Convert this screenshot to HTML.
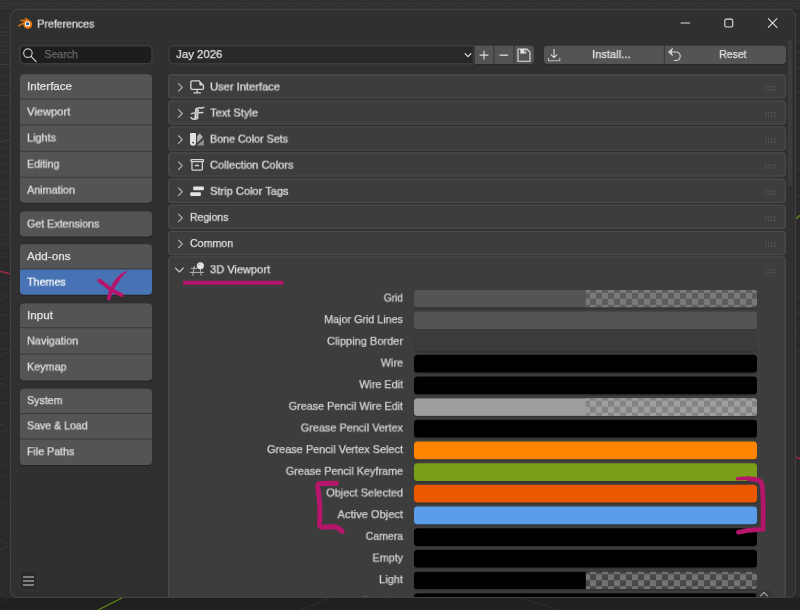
<!DOCTYPE html>
<html lang="en"><head><meta charset="utf-8"><title>Preferences</title>
<style>
html,body{margin:0;padding:0}
body{width:800px;height:610px;overflow:hidden;background:#2a2a2a;position:relative;font-family:"Liberation Sans",sans-serif;font-size:11.5px}
#g{position:absolute;left:0;top:0;display:block}
#tx{position:absolute;left:0;top:0;width:800px;height:597px;overflow:hidden}
.t{position:absolute;white-space:nowrap;transform-origin:0 50%;display:block;height:16px;line-height:16px;will-change:transform;-webkit-font-smoothing:antialiased;-webkit-text-stroke:0.25px}
</style></head><body>
<svg id="g" width="800" height="610" viewBox="0 0 800 610">
<defs><filter id="bl" x="-5%" y="-30%" width="110%" height="160%"><feGaussianBlur stdDeviation="0.6"/></filter></defs>
<svg x="0" y="0" width="800" height="610" viewBox="0 0 800 610" overflow="visible"><defs><pattern id="dots" x="0" y="0" width="3" height="2" patternUnits="userSpaceOnUse"><rect width="3" height="2" fill="#2e2e2e"/><rect x="0" y="0" width="2" height="1" fill="#363636"/></pattern></defs><rect x="0" y="0" width="800" height="9.5" fill="url(#dots)"/><rect x="0" y="3" width="800" height="1.5" fill="#383838" opacity="0.5"/><rect x="0" y="9.5" width="11" height="240" fill="#2d2d2d"/><rect x="0" y="598" width="800" height="12" fill="#202020"/><g stroke="#353535" stroke-width="1.1" fill="none"><path d="M0 19.7 L10.5 19.7 M0 24.0 L10.5 24.0 M0 27.5 L10.5 27.5 M0 35.5 L10.5 35.5 M0 42.0 L10.5 42.0 M0 46.0 L10.5 46.0 M0 50.0 L10.5 50.0 M0 67.5 L10.5 67.5 M0 76.0 L10.5 76.0 M0 84.0 L10.5 84.0 M0 104.3 L10.5 104.0 M0 112.0 L10.5 111.5 M0 120.0 L10.5 119.5 M0 128.0 L10.5 127.3 M0 134.0 L10.5 133.3 M0 149.0 L10.5 148.3 M0 156.0 L10.5 155.3 M0 164.6 L10.5 164.0 M0 173.0 L10.5 172.2 M0 184.3 L10.5 183.4 M0 192.0 L10.5 191.0 M0 206.7 L10.5 205.7 M0 215.0 L10.5 214.0 M0 224.5 L10.5 223.3 M0 235.0 L10.5 233.6 M0 245.5 L10.5 243.6 M0 251.8 L10.5 253.8 M0 257.6 L10.5 255.6 M0 284.7 L10.5 281.4 M0 295.3 L10.5 293.3 M0 300.5 L10.5 295.9 M0 316.3 L10.5 313.7 M0 334.5 L10.5 331.6 M0 347.6 L10.5 351.0 M0 355.5 L10.5 351.6 M0 379.2 L10.5 376.0 M0 383.2 L10.5 385.8 M0 404.0 L10.5 401.3 M0 424.3 L10.5 428.3 M0 432.9 L10.5 429.0 M0 467.1 L10.5 463.2 M0 475.0 L10.5 479.0 M0 505.0 L10.5 500.4 M0 539.2 L10.5 544.5 M0 549.7 L10.5 545.1"/></g><g stroke="#3c3c3c" stroke-width="1.2" fill="none"><path d="M0 32.0 L10.5 32.0 M0 52.5 L10.5 52.5 M0 64.5 L10.5 64.5 M0 95.8 L10.5 95.5 M0 141.8 L10.5 139.8 M0 199.5 L10.5 197.5"/></g><g stroke="#363636" stroke-width="1" fill="none"><path d="M796 14 H800 M796 22 H800 M796 30 H800 M796 41 H800 M796 52 H800 M796 68 H800 M796 86 H800 M796 92 H800 M796 118 H800 M796 150 H800 M796 169 H800 M796 186 H800 M796 196 H800 M796 205 H800 M796 232 H800 M796 283 L800 282.5 M796 297 L800 296.5 M796 313 L800 313 M796 330 L800 326 M796 351 L800 351 M796 426 L800 426.5 M796 479 L800 476 M796 489 L800 487 M796 530 L800 529 M796 582 L800 579"/></g><path d="M0 271.2 L10.5 274" stroke="#9e2840" stroke-width="1.5"/><path d="M796 218.8 L800 215.4" stroke="#5f8a1c" stroke-width="1.4"/><path d="M796 457 L800 459" stroke="#9e2840" stroke-width="1.5"/></svg>
<path d="M18 9H788A8 8 0 0 1 796 17V590A8 8 0 0 1 788 598H18A8 8 0 0 1 10 590V17A8 8 0 0 1 18 9Z" fill="#43413f"/>
<path d="M18 10H788A7 7 0 0 1 795 17V590A7 7 0 0 1 788 597H18A7 7 0 0 1 11 590V17A7 7 0 0 1 18 10Z" fill="#303030"/>
<svg x="14" y="12" width="30" height="22" viewBox="14 12 30 22" overflow="visible"><g stroke="#ea7a0c" fill="none" stroke-linecap="round"><path d="M20.9 20.5 H27" stroke-width="1.35"/><path d="M18.9 25.9 L25 22" stroke-width="1.45"/><path d="M25.4 18.3 L28.6 20.6" stroke-width="1.3"/></g><ellipse cx="27.75" cy="24.35" rx="4.45" ry="4.3" fill="#e9790b"/><circle cx="27.5" cy="23.9" r="2.65" fill="#f7f2ea"/><ellipse cx="27.55" cy="23.8" rx="1.65" ry="1.5" fill="#24579a"/></svg>
<svg x="676" y="14" width="110" height="18" viewBox="0 0 110 18" overflow="visible"><g stroke="#e0e0e0" stroke-width="1.1" fill="none" stroke-linecap="round"><path d="M5 9 H13.5"/><rect x="48.8" y="5.1" width="7.9" height="7.9" rx="1.5"/><path d="M92.3 4.7 L100.9 13.3 M100.9 4.7 L92.3 13.3"/></g></svg>
<path d="M24.2 45H147.8A5 5 0 0 1 152.8 50V59.5A5 5 0 0 1 147.8 64.5H24.2A5 5 0 0 1 19.2 59.5V50A5 5 0 0 1 24.2 45Z" fill="#3c3c3c"/>
<path d="M24.2 46.6H147.8A3.4 3.4 0 0 1 151.2 50V59.5A3.4 3.4 0 0 1 147.8 62.9H24.2A3.4 3.4 0 0 1 20.8 59.5V50A3.4 3.4 0 0 1 24.2 46.6Z" fill="#1d1d1d"/>
<svg x="22" y="47" width="16" height="16" viewBox="0 0 16 16" overflow="visible"><g stroke="#c6c6c6" stroke-width="1.2" fill="none" stroke-linecap="round"><circle cx="5.9" cy="6.2" r="4.25"/><path d="M9.1 9.5 L14.2 14.6"/></g></svg>
<path d="M24 75.3H148A4 4 0 0 1 152 79.3V199.8A4 4 0 0 1 148 203.8H24A4 4 0 0 1 20 199.8V79.3A4 4 0 0 1 24 75.3Z" fill="#000" opacity="0.3" filter="url(#bl)"/>
<path d="M24 74.3H148A4 4 0 0 1 152 78.3V198.8A4 4 0 0 1 148 202.8H24A4 4 0 0 1 20 198.8V78.3A4 4 0 0 1 24 74.3Z" fill="#393939"/>
<path d="M24 74.3H148A4 4 0 0 1 152 78.3V98.5H20V78.3A4 4 0 0 1 24 74.3Z" fill="#545454"/>
<path d="M20 99.5H152V124.5H20V99.5Z" fill="#545454"/>
<path d="M20 125.5H152V150.7H20V125.5Z" fill="#545454"/>
<path d="M20 151.7H152V176.7H20V151.7Z" fill="#545454"/>
<path d="M20 177.7H152V198.8A4 4 0 0 1 148 202.8H24A4 4 0 0 1 20 198.8V177.7Z" fill="#545454"/>
<path d="M24 212.5H148A4 4 0 0 1 152 216.5V233.4A4 4 0 0 1 148 237.4H24A4 4 0 0 1 20 233.4V216.5A4 4 0 0 1 24 212.5Z" fill="#000" opacity="0.3" filter="url(#bl)"/>
<path d="M24 211.5H148A4 4 0 0 1 152 215.5V232.4A4 4 0 0 1 148 236.4H24A4 4 0 0 1 20 232.4V215.5A4 4 0 0 1 24 211.5Z" fill="#393939"/>
<path d="M24 211.5H148A4 4 0 0 1 152 215.5V232.4A4 4 0 0 1 148 236.4H24A4 4 0 0 1 20 232.4V215.5A4 4 0 0 1 24 211.5Z" fill="#545454"/>
<path d="M24 245.3H148A4 4 0 0 1 152 249.3V291.7A4 4 0 0 1 148 295.7H24A4 4 0 0 1 20 291.7V249.3A4 4 0 0 1 24 245.3Z" fill="#000" opacity="0.3" filter="url(#bl)"/>
<path d="M24 244.3H148A4 4 0 0 1 152 248.3V290.7A4 4 0 0 1 148 294.7H24A4 4 0 0 1 20 290.7V248.3A4 4 0 0 1 24 244.3Z" fill="#393939"/>
<path d="M24 244.3H148A4 4 0 0 1 152 248.3V268.6H20V248.3A4 4 0 0 1 24 244.3Z" fill="#545454"/>
<path d="M20 269.6H152V290.7A4 4 0 0 1 148 294.7H24A4 4 0 0 1 20 290.7V269.6Z" fill="#4772b3"/>
<path d="M24 304.6H148A4 4 0 0 1 152 308.6V377.4A4 4 0 0 1 148 381.4H24A4 4 0 0 1 20 377.4V308.6A4 4 0 0 1 24 304.6Z" fill="#000" opacity="0.3" filter="url(#bl)"/>
<path d="M24 303.6H148A4 4 0 0 1 152 307.6V376.4A4 4 0 0 1 148 380.4H24A4 4 0 0 1 20 376.4V307.6A4 4 0 0 1 24 303.6Z" fill="#393939"/>
<path d="M24 303.6H148A4 4 0 0 1 152 307.6V327.2H20V307.6A4 4 0 0 1 24 303.6Z" fill="#545454"/>
<path d="M20 328.2H152V353.4H20V328.2Z" fill="#545454"/>
<path d="M20 354.4H152V376.4A4 4 0 0 1 148 380.4H24A4 4 0 0 1 20 376.4V354.4Z" fill="#545454"/>
<path d="M24 389.7H148A4 4 0 0 1 152 393.7V462.1A4 4 0 0 1 148 466.1H24A4 4 0 0 1 20 462.1V393.7A4 4 0 0 1 24 389.7Z" fill="#000" opacity="0.3" filter="url(#bl)"/>
<path d="M24 388.7H148A4 4 0 0 1 152 392.7V461.1A4 4 0 0 1 148 465.1H24A4 4 0 0 1 20 461.1V392.7A4 4 0 0 1 24 388.7Z" fill="#393939"/>
<path d="M24 388.7H148A4 4 0 0 1 152 392.7V412.9H20V392.7A4 4 0 0 1 24 388.7Z" fill="#545454"/>
<path d="M20 413.9H152V438.6H20V413.9Z" fill="#545454"/>
<path d="M20 439.6H152V461.1A4 4 0 0 1 148 465.1H24A4 4 0 0 1 20 461.1V439.6Z" fill="#545454"/>
<path d="M23.8 570.8H33.4A4.5 4.5 0 0 1 37.9 575.3V585.9A4.5 4.5 0 0 1 33.4 590.4H23.8A4.5 4.5 0 0 1 19.3 585.9V575.3A4.5 4.5 0 0 1 23.8 570.8Z" fill="#383838"/>
<path d="M23.8 571.8H33.4A3.5 3.5 0 0 1 36.9 575.3V585.9A3.5 3.5 0 0 1 33.4 589.4H23.8A3.5 3.5 0 0 1 20.3 585.9V575.3A3.5 3.5 0 0 1 23.8 571.8Z" fill="#2a2a2a"/>
<svg x="22" y="575" width="14" height="12" viewBox="0 0 14 12" overflow="visible"><g stroke="#9a9a9a" stroke-width="1.3"><path d="M1 2 H12 M1 6 H12 M1 10 H12"/></g></svg>
<path d="M173.1 45H473.9V64.5H173.1A5 5 0 0 1 168.1 59.5V50A5 5 0 0 1 173.1 45Z" fill="#3c3c3c"/>
<path d="M173.1 46.6H472.9V62.9H173.1A3.4 3.4 0 0 1 169.7 59.5V50A3.4 3.4 0 0 1 173.1 46.6Z" fill="#282828"/>
<svg x="463" y="50.3" width="10" height="10" viewBox="0 0 10 10" overflow="visible"><path d="M2.1 3.4 L5 6.4 L7.9 3.4" stroke="#e0e0e0" stroke-width="1.2" fill="none" stroke-linecap="round" stroke-linejoin="round"/></svg>
<path d="M474.8 46.2H529.8A4 4 0 0 1 533.8 50.2V60.5A4 4 0 0 1 529.8 64.5H474.8V46.2Z" fill="#000" opacity="0.35" filter="url(#bl)"/>
<path d="M474.8 45.7H529.8A4 4 0 0 1 533.8 49.7V60A4 4 0 0 1 529.8 64H474.8V45.7Z" fill="#3a3a3a"/>
<path d="M474.8 45.7H493.3V64H474.8V45.7Z" fill="#545454"/>
<path d="M494.6 45.7H513.2V64H494.6V45.7Z" fill="#545454"/>
<path d="M514.6 45.7H529.8A4 4 0 0 1 533.8 49.7V60A4 4 0 0 1 529.8 64H514.6V45.7Z" fill="#545454"/>
<svg x="474.8" y="46" width="59" height="18" viewBox="0 0 59 18" overflow="visible"><g stroke="#e0e0e0" stroke-width="1.1" fill="none" stroke-linecap="round" stroke-linejoin="round"><path d="M5.2 9.1 H13.2 M9.2 5.1 V13.1"/><path d="M25.1 9.1 H32.9"/><path d="M43.2 3 H52 L55.2 6.2 V15.2 H43.2 Z"/></g><rect x="45.5" y="3" width="6" height="4.6" fill="#e0e0e0"/><rect x="49.6" y="3.8" width="1.2" height="2.6" fill="#545454"/></svg>
<path d="M548 46.2H782A4 4 0 0 1 786 50.2V60.5A4 4 0 0 1 782 64.5H548A4 4 0 0 1 544 60.5V50.2A4 4 0 0 1 548 46.2Z" fill="#000" opacity="0.35" filter="url(#bl)"/>
<path d="M548 45.7H782A4 4 0 0 1 786 49.7V60A4 4 0 0 1 782 64H548A4 4 0 0 1 544 60V49.7A4 4 0 0 1 548 45.7Z" fill="#3a3a3a"/>
<path d="M548 45.7H663.8V64H548A4 4 0 0 1 544 60V49.7A4 4 0 0 1 548 45.7Z" fill="#545454"/>
<path d="M665 45.7H782A4 4 0 0 1 786 49.7V60A4 4 0 0 1 782 64H665V45.7Z" fill="#545454"/>
<svg x="546" y="47" width="16" height="16" viewBox="0 0 16 16" overflow="visible"><g stroke="#d8d8d8" stroke-width="1.1" fill="none" stroke-linecap="round" stroke-linejoin="round"><path d="M8 2.2 V10.4 M5.2 7.8 L8 10.6 L10.8 7.8"/><path d="M2.4 11.2 V13.2 Q2.4 13.8 3 13.8 H13.2 Q13.8 13.8 13.8 13.2 V11.2" stroke="#c0c0c0"/></g></svg>
<svg x="667" y="47" width="16" height="16" viewBox="0 0 16 16" overflow="visible"><g stroke="#d8d8d8" stroke-width="1.1" fill="none" stroke-linecap="round" stroke-linejoin="round"><path d="M2.3 5 H9 A4.25 4.25 0 0 1 9 13.5 H7.4"/><path d="M5.3 2 L2.1 5 L5.3 8" stroke-width="1.4"/><path d="M2.6 5 L4.9 3 V7 Z" fill="#d8d8d8" stroke="none"/></g></svg>
<path d="M789.9 39.5H789.9A2.1 2.1 0 0 1 792 41.6V183.9A2.1 2.1 0 0 1 789.9 186H789.9A2.1 2.1 0 0 1 787.8 183.9V41.6A2.1 2.1 0 0 1 789.9 39.5Z" fill="#3b3b3b"/>
<path d="M172 74.1H782A4 4 0 0 1 786 78.1V94.6A4 4 0 0 1 782 98.6H172A4 4 0 0 1 168 94.6V78.1A4 4 0 0 1 172 74.1Z" fill="#4a4a4a"/>
<path d="M172 75.4H782A2.7 2.7 0 0 1 784.7 78.1V94.6A2.7 2.7 0 0 1 782 97.3H172A2.7 2.7 0 0 1 169.3 94.6V78.1A2.7 2.7 0 0 1 172 75.4Z" fill="#3d3d3d"/>
<svg x="177" y="82.2" width="8" height="11" viewBox="0 0 8 11" overflow="visible"><path d="M1.5 1.4 L5.3 5.2 L1.5 9.0" stroke="#b4b4b4" stroke-width="1.15" fill="none" stroke-linecap="round" stroke-linejoin="round"/></svg>
<svg x="189.1" y="78.3" width="16" height="16" viewBox="0 0 16 16" overflow="visible"><g stroke="#d4d4d4" stroke-width="1.3" fill="none" stroke-linejoin="round" stroke-linecap="round"><path d="M10.3 2.65 H3 Q1.75 2.65 1.75 3.9 V9.9 Q1.75 11.15 3 11.15 H13.1 Q14.35 11.15 14.35 9.9 V7.1"/><path d="M8.05 11.3 V14.2 M4.8 14.5 H11.3"/></g><path d="M10.2 2 L15 6.9 V7.3 H11.2 Q10.2 7.3 10.2 6.3 Z" fill="#d4d4d4"/></svg>
<svg x="765" y="86.1" width="11" height="5" viewBox="0 0 11 5" overflow="visible"><rect x="0.00" y="0.00" width="1.3" height="1.3" fill="#5c5c5c"/><rect x="3.00" y="0.00" width="1.3" height="1.3" fill="#5c5c5c"/><rect x="6.00" y="0.00" width="1.3" height="1.3" fill="#5c5c5c"/><rect x="9.00" y="0.00" width="1.3" height="1.3" fill="#5c5c5c"/><rect x="0.00" y="3.00" width="1.3" height="1.3" fill="#5c5c5c"/><rect x="3.00" y="3.00" width="1.3" height="1.3" fill="#5c5c5c"/><rect x="6.00" y="3.00" width="1.3" height="1.3" fill="#5c5c5c"/><rect x="9.00" y="3.00" width="1.3" height="1.3" fill="#5c5c5c"/></svg>
<path d="M172 100.19H782A4 4 0 0 1 786 104.19V120.69A4 4 0 0 1 782 124.69H172A4 4 0 0 1 168 120.69V104.19A4 4 0 0 1 172 100.19Z" fill="#4a4a4a"/>
<path d="M172 101.49H782A2.7 2.7 0 0 1 784.7 104.19V120.69A2.7 2.7 0 0 1 782 123.39H172A2.7 2.7 0 0 1 169.3 120.69V104.19A2.7 2.7 0 0 1 172 101.49Z" fill="#3d3d3d"/>
<svg x="177" y="108.29" width="8" height="11" viewBox="0 0 8 11" overflow="visible"><path d="M1.5 1.4 L5.3 5.2 L1.5 9.0" stroke="#b4b4b4" stroke-width="1.15" fill="none" stroke-linecap="round" stroke-linejoin="round"/></svg>
<svg x="189.1" y="104.39" width="16" height="16" viewBox="0 0 16 16" overflow="visible"><g transform="translate(0.6 1)"><path d="M5.4 4 L9.3 3.6 L8.4 13.1 L4.5 13.4 Z" fill="#d4d4d4"/><path d="M7.3 5.2 L6.9 12.2" stroke="#858585" stroke-width="0.7" fill="none"/><g stroke="#d4d4d4" fill="none" stroke-linecap="round" stroke-linejoin="round"><path d="M6 3.7 Q8.4 1.8 10.9 2.5 Q12.9 3 14 1.9" stroke-width="1.6"/><path d="M9.2 7.3 L13.2 7" stroke-width="1.5"/><path d="M1.7 8.2 L5 7.5" stroke-width="1.4"/><path d="M1.4 12.2 Q2.3 14 4.8 13.9 Q7.2 13.8 8 12.7" stroke-width="1.6"/></g></g></svg>
<svg x="765" y="112.19" width="11" height="5" viewBox="0 0 11 5" overflow="visible"><rect x="0.00" y="0.00" width="1.3" height="1.3" fill="#5c5c5c"/><rect x="3.00" y="0.00" width="1.3" height="1.3" fill="#5c5c5c"/><rect x="6.00" y="0.00" width="1.3" height="1.3" fill="#5c5c5c"/><rect x="9.00" y="0.00" width="1.3" height="1.3" fill="#5c5c5c"/><rect x="0.00" y="3.00" width="1.3" height="1.3" fill="#5c5c5c"/><rect x="3.00" y="3.00" width="1.3" height="1.3" fill="#5c5c5c"/><rect x="6.00" y="3.00" width="1.3" height="1.3" fill="#5c5c5c"/><rect x="9.00" y="3.00" width="1.3" height="1.3" fill="#5c5c5c"/></svg>
<path d="M172 126.28H782A4 4 0 0 1 786 130.28V146.78A4 4 0 0 1 782 150.78H172A4 4 0 0 1 168 146.78V130.28A4 4 0 0 1 172 126.28Z" fill="#4a4a4a"/>
<path d="M172 127.58H782A2.7 2.7 0 0 1 784.7 130.28V146.78A2.7 2.7 0 0 1 782 149.48H172A2.7 2.7 0 0 1 169.3 146.78V130.28A2.7 2.7 0 0 1 172 127.58Z" fill="#3d3d3d"/>
<svg x="177" y="134.38" width="8" height="11" viewBox="0 0 8 11" overflow="visible"><path d="M1.5 1.4 L5.3 5.2 L1.5 9.0" stroke="#b4b4b4" stroke-width="1.15" fill="none" stroke-linecap="round" stroke-linejoin="round"/></svg>
<svg x="189.1" y="130.48" width="16" height="16" viewBox="0 0 16 16" overflow="visible"><path d="M0.9 3.4 Q0.9 2.4 1.9 2.4 H5.9 Q6.9 2.4 6.9 3.4 V12.2 Q6.9 15.2 3.9 15.2 Q0.9 15.2 0.9 12.2 Z" fill="#e2e2e2"/><circle cx="4" cy="12.1" r="0.95" fill="#3d3d3d"/><path d="M8 5.8 L10.7 2.8 L13.7 6.7 L8 12.6 Z" fill="#b2b2b2"/><path d="M7.7 14.9 L14.8 8.8 V14.9 Z" fill="#8e8e8e"/></svg>
<svg x="765" y="138.28" width="11" height="5" viewBox="0 0 11 5" overflow="visible"><rect x="0.00" y="0.00" width="1.3" height="1.3" fill="#5c5c5c"/><rect x="3.00" y="0.00" width="1.3" height="1.3" fill="#5c5c5c"/><rect x="6.00" y="0.00" width="1.3" height="1.3" fill="#5c5c5c"/><rect x="9.00" y="0.00" width="1.3" height="1.3" fill="#5c5c5c"/><rect x="0.00" y="3.00" width="1.3" height="1.3" fill="#5c5c5c"/><rect x="3.00" y="3.00" width="1.3" height="1.3" fill="#5c5c5c"/><rect x="6.00" y="3.00" width="1.3" height="1.3" fill="#5c5c5c"/><rect x="9.00" y="3.00" width="1.3" height="1.3" fill="#5c5c5c"/></svg>
<path d="M172 152.37H782A4 4 0 0 1 786 156.37V172.87A4 4 0 0 1 782 176.87H172A4 4 0 0 1 168 172.87V156.37A4 4 0 0 1 172 152.37Z" fill="#4a4a4a"/>
<path d="M172 153.67H782A2.7 2.7 0 0 1 784.7 156.37V172.87A2.7 2.7 0 0 1 782 175.57H172A2.7 2.7 0 0 1 169.3 172.87V156.37A2.7 2.7 0 0 1 172 153.67Z" fill="#3d3d3d"/>
<svg x="177" y="160.47" width="8" height="11" viewBox="0 0 8 11" overflow="visible"><path d="M1.5 1.4 L5.3 5.2 L1.5 9.0" stroke="#b4b4b4" stroke-width="1.15" fill="none" stroke-linecap="round" stroke-linejoin="round"/></svg>
<svg x="189.1" y="156.57" width="16" height="16" viewBox="0 0 16 16" overflow="visible"><g stroke="#d4d4d4" stroke-width="1.25" fill="none" stroke-linejoin="round"><rect x="1.9" y="3" width="12.5" height="2.1" rx="0.6"/><path d="M2.85 5.4 V12.6 Q2.85 13.65 3.9 13.65 H12.2 Q13.25 13.65 13.25 12.6 V5.4"/></g><rect x="5.6" y="8.3" width="4.4" height="1.4" rx="0.6" fill="#d4d4d4"/></svg>
<svg x="765" y="164.37" width="11" height="5" viewBox="0 0 11 5" overflow="visible"><rect x="0.00" y="0.00" width="1.3" height="1.3" fill="#5c5c5c"/><rect x="3.00" y="0.00" width="1.3" height="1.3" fill="#5c5c5c"/><rect x="6.00" y="0.00" width="1.3" height="1.3" fill="#5c5c5c"/><rect x="9.00" y="0.00" width="1.3" height="1.3" fill="#5c5c5c"/><rect x="0.00" y="3.00" width="1.3" height="1.3" fill="#5c5c5c"/><rect x="3.00" y="3.00" width="1.3" height="1.3" fill="#5c5c5c"/><rect x="6.00" y="3.00" width="1.3" height="1.3" fill="#5c5c5c"/><rect x="9.00" y="3.00" width="1.3" height="1.3" fill="#5c5c5c"/></svg>
<path d="M172 178.46H782A4 4 0 0 1 786 182.46V198.96A4 4 0 0 1 782 202.96H172A4 4 0 0 1 168 198.96V182.46A4 4 0 0 1 172 178.46Z" fill="#4a4a4a"/>
<path d="M172 179.76H782A2.7 2.7 0 0 1 784.7 182.46V198.96A2.7 2.7 0 0 1 782 201.66H172A2.7 2.7 0 0 1 169.3 198.96V182.46A2.7 2.7 0 0 1 172 179.76Z" fill="#3d3d3d"/>
<svg x="177" y="186.56" width="8" height="11" viewBox="0 0 8 11" overflow="visible"><path d="M1.5 1.4 L5.3 5.2 L1.5 9.0" stroke="#b4b4b4" stroke-width="1.15" fill="none" stroke-linecap="round" stroke-linejoin="round"/></svg>
<svg x="189.1" y="182.66" width="16" height="16" viewBox="0 0 16 16" overflow="visible"><rect x="4.1" y="3.8" width="10.7" height="3.7" rx="0.9" fill="#e4e4e4"/><rect x="1.2" y="9.6" width="10.6" height="3.7" rx="0.9" fill="#e4e4e4"/></svg>
<svg x="765" y="190.46" width="11" height="5" viewBox="0 0 11 5" overflow="visible"><rect x="0.00" y="0.00" width="1.3" height="1.3" fill="#5c5c5c"/><rect x="3.00" y="0.00" width="1.3" height="1.3" fill="#5c5c5c"/><rect x="6.00" y="0.00" width="1.3" height="1.3" fill="#5c5c5c"/><rect x="9.00" y="0.00" width="1.3" height="1.3" fill="#5c5c5c"/><rect x="0.00" y="3.00" width="1.3" height="1.3" fill="#5c5c5c"/><rect x="3.00" y="3.00" width="1.3" height="1.3" fill="#5c5c5c"/><rect x="6.00" y="3.00" width="1.3" height="1.3" fill="#5c5c5c"/><rect x="9.00" y="3.00" width="1.3" height="1.3" fill="#5c5c5c"/></svg>
<path d="M172 204.55H782A4 4 0 0 1 786 208.55V225.05A4 4 0 0 1 782 229.05H172A4 4 0 0 1 168 225.05V208.55A4 4 0 0 1 172 204.55Z" fill="#4a4a4a"/>
<path d="M172 205.85H782A2.7 2.7 0 0 1 784.7 208.55V225.05A2.7 2.7 0 0 1 782 227.75H172A2.7 2.7 0 0 1 169.3 225.05V208.55A2.7 2.7 0 0 1 172 205.85Z" fill="#3d3d3d"/>
<svg x="177" y="212.65" width="8" height="11" viewBox="0 0 8 11" overflow="visible"><path d="M1.5 1.4 L5.3 5.2 L1.5 9.0" stroke="#b4b4b4" stroke-width="1.15" fill="none" stroke-linecap="round" stroke-linejoin="round"/></svg>
<svg x="765" y="216.55" width="11" height="5" viewBox="0 0 11 5" overflow="visible"><rect x="0.00" y="0.00" width="1.3" height="1.3" fill="#5c5c5c"/><rect x="3.00" y="0.00" width="1.3" height="1.3" fill="#5c5c5c"/><rect x="6.00" y="0.00" width="1.3" height="1.3" fill="#5c5c5c"/><rect x="9.00" y="0.00" width="1.3" height="1.3" fill="#5c5c5c"/><rect x="0.00" y="3.00" width="1.3" height="1.3" fill="#5c5c5c"/><rect x="3.00" y="3.00" width="1.3" height="1.3" fill="#5c5c5c"/><rect x="6.00" y="3.00" width="1.3" height="1.3" fill="#5c5c5c"/><rect x="9.00" y="3.00" width="1.3" height="1.3" fill="#5c5c5c"/></svg>
<path d="M172 230.64H782A4 4 0 0 1 786 234.64V251.14A4 4 0 0 1 782 255.14H172A4 4 0 0 1 168 251.14V234.64A4 4 0 0 1 172 230.64Z" fill="#4a4a4a"/>
<path d="M172 231.94H782A2.7 2.7 0 0 1 784.7 234.64V251.14A2.7 2.7 0 0 1 782 253.84H172A2.7 2.7 0 0 1 169.3 251.14V234.64A2.7 2.7 0 0 1 172 231.94Z" fill="#3d3d3d"/>
<svg x="177" y="238.74" width="8" height="11" viewBox="0 0 8 11" overflow="visible"><path d="M1.5 1.4 L5.3 5.2 L1.5 9.0" stroke="#b4b4b4" stroke-width="1.15" fill="none" stroke-linecap="round" stroke-linejoin="round"/></svg>
<svg x="765" y="242.64" width="11" height="5" viewBox="0 0 11 5" overflow="visible"><rect x="0.00" y="0.00" width="1.3" height="1.3" fill="#5c5c5c"/><rect x="3.00" y="0.00" width="1.3" height="1.3" fill="#5c5c5c"/><rect x="6.00" y="0.00" width="1.3" height="1.3" fill="#5c5c5c"/><rect x="9.00" y="0.00" width="1.3" height="1.3" fill="#5c5c5c"/><rect x="0.00" y="3.00" width="1.3" height="1.3" fill="#5c5c5c"/><rect x="3.00" y="3.00" width="1.3" height="1.3" fill="#5c5c5c"/><rect x="6.00" y="3.00" width="1.3" height="1.3" fill="#5c5c5c"/><rect x="9.00" y="3.00" width="1.3" height="1.3" fill="#5c5c5c"/></svg>
<path d="M172 256.3H782A4 4 0 0 1 786 260.3V612.3A4 4 0 0 1 782 616.3H172A4 4 0 0 1 168 612.3V260.3A4 4 0 0 1 172 256.3Z" fill="#4a4a4a"/>
<path d="M172 257.6H782A2.7 2.7 0 0 1 784.7 260.3V612.3A2.7 2.7 0 0 1 782 615H172A2.7 2.7 0 0 1 169.3 612.3V260.3A2.7 2.7 0 0 1 172 257.6Z" fill="#3d3d3d"/>
<svg x="174.1" y="265.5" width="11" height="10" viewBox="0 0 11 10" overflow="visible"><path d="M1.3 2.5 L5.25 6.5 L9.2 2.5" stroke="#c4c4c4" stroke-width="1.15" fill="none" stroke-linecap="round" stroke-linejoin="round"/></svg>
<svg x="189" y="261" width="16" height="16" viewBox="0 0 16 16" overflow="visible"><g stroke="#bcbcbc" stroke-width="0.95" fill="none" stroke-linecap="round"><path d="M2.3 7.3 H8 M1.2 11.4 H14.7 M5.5 5.3 L3.8 14.2 M11.5 8.5 L12 14.2"/></g><circle cx="11.4" cy="4.8" r="3.5" fill="#e4e4e4"/><path d="M9.6 4.2 Q10 3.2 11 2.9" stroke="#9a9a9a" stroke-width="0.8" fill="none" stroke-linecap="round"/></svg>
<svg x="765" y="269" width="11" height="5" viewBox="0 0 11 5" overflow="visible"><rect x="0.00" y="0.00" width="1.3" height="1.3" fill="#5c5c5c"/><rect x="3.00" y="0.00" width="1.3" height="1.3" fill="#5c5c5c"/><rect x="6.00" y="0.00" width="1.3" height="1.3" fill="#5c5c5c"/><rect x="9.00" y="0.00" width="1.3" height="1.3" fill="#5c5c5c"/><rect x="0.00" y="3.00" width="1.3" height="1.3" fill="#5c5c5c"/><rect x="3.00" y="3.00" width="1.3" height="1.3" fill="#5c5c5c"/><rect x="6.00" y="3.00" width="1.3" height="1.3" fill="#5c5c5c"/><rect x="9.00" y="3.00" width="1.3" height="1.3" fill="#5c5c5c"/></svg>
<path d="M417.5 291.25H753.5A3.5 3.5 0 0 1 757 294.75V305.65A3.5 3.5 0 0 1 753.5 309.15H417.5A3.5 3.5 0 0 1 414 305.65V294.75A3.5 3.5 0 0 1 417.5 291.25Z" fill="#343434"/>
<defs><clipPath id="c1"><path d="M417.5 289.85H753.5A3.5 3.5 0 0 1 757 293.35V304.05A3.5 3.5 0 0 1 753.5 307.55H417.5A3.5 3.5 0 0 1 414 304.05V293.35A3.5 3.5 0 0 1 417.5 289.85Z"/></clipPath><pattern id="ck0" x="2" y="4.85" width="12" height="12" patternUnits="userSpaceOnUse"><rect width="12" height="12" fill="#5c5c5c"/><rect width="6" height="6" fill="#7a7a7a"/><rect x="6" y="6" width="6" height="6" fill="#7a7a7a"/></pattern></defs>
<g clip-path="url(#c1)"><rect x="414" y="289.85" width="343" height="17.7" fill="#545454"/><rect x="585.8" y="289.85" width="171.2" height="17.7" fill="url(#ck0)"/></g>
<path d="M417.5 312.92H753.5A3.5 3.5 0 0 1 757 316.42V327.32A3.5 3.5 0 0 1 753.5 330.82H417.5A3.5 3.5 0 0 1 414 327.32V316.42A3.5 3.5 0 0 1 417.5 312.92Z" fill="#343434"/>
<path d="M417.5 311.52H753.5A3.5 3.5 0 0 1 757 315.02V325.72A3.5 3.5 0 0 1 753.5 329.22H417.5A3.5 3.5 0 0 1 414 325.72V315.02A3.5 3.5 0 0 1 417.5 311.52Z" fill="#545454"/>
<path d="M417.5 334.58H753.5A3.5 3.5 0 0 1 757 338.08V348.98A3.5 3.5 0 0 1 753.5 352.48H417.5A3.5 3.5 0 0 1 414 348.98V338.08A3.5 3.5 0 0 1 417.5 334.58Z" fill="#343434"/>
<path d="M417.5 333.18H753.5A3.5 3.5 0 0 1 757 336.68V347.38A3.5 3.5 0 0 1 753.5 350.88H417.5A3.5 3.5 0 0 1 414 347.38V336.68A3.5 3.5 0 0 1 417.5 333.18Z" fill="#3b3b3b"/>
<path d="M417.5 356.25H753.5A3.5 3.5 0 0 1 757 359.75V370.65A3.5 3.5 0 0 1 753.5 374.15H417.5A3.5 3.5 0 0 1 414 370.65V359.75A3.5 3.5 0 0 1 417.5 356.25Z" fill="#343434"/>
<path d="M417.5 354.85H753.5A3.5 3.5 0 0 1 757 358.35V369.05A3.5 3.5 0 0 1 753.5 372.55H417.5A3.5 3.5 0 0 1 414 369.05V358.35A3.5 3.5 0 0 1 417.5 354.85Z" fill="#000000"/>
<path d="M417.5 377.92H753.5A3.5 3.5 0 0 1 757 381.42V392.32A3.5 3.5 0 0 1 753.5 395.82H417.5A3.5 3.5 0 0 1 414 392.32V381.42A3.5 3.5 0 0 1 417.5 377.92Z" fill="#343434"/>
<path d="M417.5 376.52H753.5A3.5 3.5 0 0 1 757 380.02V390.72A3.5 3.5 0 0 1 753.5 394.22H417.5A3.5 3.5 0 0 1 414 390.72V380.02A3.5 3.5 0 0 1 417.5 376.52Z" fill="#000000"/>
<path d="M417.5 399.58H753.5A3.5 3.5 0 0 1 757 403.08V413.98A3.5 3.5 0 0 1 753.5 417.48H417.5A3.5 3.5 0 0 1 414 413.98V403.08A3.5 3.5 0 0 1 417.5 399.58Z" fill="#343434"/>
<defs><clipPath id="c2"><path d="M417.5 398.18H753.5A3.5 3.5 0 0 1 757 401.68V412.38A3.5 3.5 0 0 1 753.5 415.88H417.5A3.5 3.5 0 0 1 414 412.38V401.68A3.5 3.5 0 0 1 417.5 398.18Z"/></clipPath><pattern id="ck5" x="2" y="4.68" width="12" height="12" patternUnits="userSpaceOnUse"><rect width="12" height="12" fill="#848484"/><rect width="6" height="6" fill="#9e9e9e"/><rect x="6" y="6" width="6" height="6" fill="#9e9e9e"/></pattern></defs>
<g clip-path="url(#c2)"><rect x="414" y="398.18" width="343" height="17.7" fill="#9d9d9d"/><rect x="585.8" y="398.18" width="171.2" height="17.7" fill="url(#ck5)"/></g>
<path d="M417.5 421.25H753.5A3.5 3.5 0 0 1 757 424.75V435.65A3.5 3.5 0 0 1 753.5 439.15H417.5A3.5 3.5 0 0 1 414 435.65V424.75A3.5 3.5 0 0 1 417.5 421.25Z" fill="#343434"/>
<path d="M417.5 419.85H753.5A3.5 3.5 0 0 1 757 423.35V434.05A3.5 3.5 0 0 1 753.5 437.55H417.5A3.5 3.5 0 0 1 414 434.05V423.35A3.5 3.5 0 0 1 417.5 419.85Z" fill="#000000"/>
<path d="M417.5 442.92H753.5A3.5 3.5 0 0 1 757 446.42V457.32A3.5 3.5 0 0 1 753.5 460.82H417.5A3.5 3.5 0 0 1 414 457.32V446.42A3.5 3.5 0 0 1 417.5 442.92Z" fill="#343434"/>
<path d="M417.5 441.52H753.5A3.5 3.5 0 0 1 757 445.02V455.72A3.5 3.5 0 0 1 753.5 459.22H417.5A3.5 3.5 0 0 1 414 455.72V445.02A3.5 3.5 0 0 1 417.5 441.52Z" fill="#ff8500"/>
<path d="M417.5 464.58H753.5A3.5 3.5 0 0 1 757 468.08V478.98A3.5 3.5 0 0 1 753.5 482.48H417.5A3.5 3.5 0 0 1 414 478.98V468.08A3.5 3.5 0 0 1 417.5 464.58Z" fill="#343434"/>
<path d="M417.5 463.18H753.5A3.5 3.5 0 0 1 757 466.68V477.38A3.5 3.5 0 0 1 753.5 480.88H417.5A3.5 3.5 0 0 1 414 477.38V466.68A3.5 3.5 0 0 1 417.5 463.18Z" fill="#7a9e17"/>
<path d="M417.5 486.25H753.5A3.5 3.5 0 0 1 757 489.75V500.65A3.5 3.5 0 0 1 753.5 504.15H417.5A3.5 3.5 0 0 1 414 500.65V489.75A3.5 3.5 0 0 1 417.5 486.25Z" fill="#343434"/>
<path d="M417.5 484.85H753.5A3.5 3.5 0 0 1 757 488.35V499.05A3.5 3.5 0 0 1 753.5 502.55H417.5A3.5 3.5 0 0 1 414 499.05V488.35A3.5 3.5 0 0 1 417.5 484.85Z" fill="#ec5800"/>
<path d="M417.5 507.92H753.5A3.5 3.5 0 0 1 757 511.42V522.32A3.5 3.5 0 0 1 753.5 525.82H417.5A3.5 3.5 0 0 1 414 522.32V511.42A3.5 3.5 0 0 1 417.5 507.92Z" fill="#343434"/>
<path d="M417.5 506.52H753.5A3.5 3.5 0 0 1 757 510.02V520.72A3.5 3.5 0 0 1 753.5 524.22H417.5A3.5 3.5 0 0 1 414 520.72V510.02A3.5 3.5 0 0 1 417.5 506.52Z" fill="#5a9eea"/>
<path d="M417.5 529.58H753.5A3.5 3.5 0 0 1 757 533.08V543.98A3.5 3.5 0 0 1 753.5 547.48H417.5A3.5 3.5 0 0 1 414 543.98V533.08A3.5 3.5 0 0 1 417.5 529.58Z" fill="#343434"/>
<path d="M417.5 528.18H753.5A3.5 3.5 0 0 1 757 531.68V542.38A3.5 3.5 0 0 1 753.5 545.88H417.5A3.5 3.5 0 0 1 414 542.38V531.68A3.5 3.5 0 0 1 417.5 528.18Z" fill="#000000"/>
<path d="M417.5 551.25H753.5A3.5 3.5 0 0 1 757 554.75V565.65A3.5 3.5 0 0 1 753.5 569.15H417.5A3.5 3.5 0 0 1 414 565.65V554.75A3.5 3.5 0 0 1 417.5 551.25Z" fill="#343434"/>
<path d="M417.5 549.85H753.5A3.5 3.5 0 0 1 757 553.35V564.05A3.5 3.5 0 0 1 753.5 567.55H417.5A3.5 3.5 0 0 1 414 564.05V553.35A3.5 3.5 0 0 1 417.5 549.85Z" fill="#000000"/>
<path d="M417.5 572.92H753.5A3.5 3.5 0 0 1 757 576.42V587.32A3.5 3.5 0 0 1 753.5 590.82H417.5A3.5 3.5 0 0 1 414 587.32V576.42A3.5 3.5 0 0 1 417.5 572.92Z" fill="#343434"/>
<defs><clipPath id="c3"><path d="M417.5 571.52H753.5A3.5 3.5 0 0 1 757 575.02V585.72A3.5 3.5 0 0 1 753.5 589.22H417.5A3.5 3.5 0 0 1 414 585.72V575.02A3.5 3.5 0 0 1 417.5 571.52Z"/></clipPath><pattern id="ck13" x="2" y="10.22" width="12" height="12" patternUnits="userSpaceOnUse"><rect width="12" height="12" fill="#737373"/><rect width="6" height="6" fill="#484848"/><rect x="6" y="6" width="6" height="6" fill="#484848"/></pattern></defs>
<g clip-path="url(#c3)"><rect x="414" y="571.52" width="343" height="17.7" fill="#000000"/><rect x="585.8" y="571.52" width="171.2" height="17.7" fill="url(#ck13)"/></g>
<path d="M417.5 594.58H753.5A3.5 3.5 0 0 1 757 598.08V608.98A3.5 3.5 0 0 1 753.5 612.48H417.5A3.5 3.5 0 0 1 414 608.98V598.08A3.5 3.5 0 0 1 417.5 594.58Z" fill="#343434"/>
<path d="M417.5 593.18H753.5A3.5 3.5 0 0 1 757 596.68V607.38A3.5 3.5 0 0 1 753.5 610.88H417.5A3.5 3.5 0 0 1 414 607.38V596.68A3.5 3.5 0 0 1 417.5 593.18Z" fill="#000000"/>
<path d="M0 598H800V610H0V598Z" fill="#202020"/>
<svg x="0" y="588" width="800" height="22" viewBox="0 0 800 22" overflow="visible"><path d="M98 22 L122 10" stroke="#5a861a" stroke-width="1.3"/><g stroke="#2e2e2e" stroke-width="1" fill="none"><path d="M0 14.6 L11.5 8.3 M520 10 L560 22 M300 22 L330 10"/></g></svg>
<path d="M759.4 590.3H768.2A3.4 3.4 0 0 1 771.6 593.7V597.1H756V593.7A3.4 3.4 0 0 1 759.4 590.3Z" fill="#363636"/>
<svg x="756" y="590.3" width="16" height="6.7" viewBox="0 0 16 6.7" overflow="visible"><path d="M4.4 5.6 L7.9 2.1 L11.4 5.6" stroke="#a0a0a0" stroke-width="1.2" fill="none" stroke-linecap="round" stroke-linejoin="round"/></svg>
<rect x="10.5" y="9.5" width="785" height="588" rx="7.5" fill="none" stroke="#43413f" stroke-width="1"/>
<svg x="0" y="0" width="800" height="610" viewBox="0 0 800 610" overflow="visible"><g stroke="#b5166b" fill="none" stroke-linecap="round" stroke-linejoin="round"><path d="M183.1 282.8 H283.3" stroke-width="4.1" stroke-linecap="butt"/><path d="M99.3 280.7 Q105 284.6 110.2 289 Q115 292.3 121.7 295.2" stroke-width="4"/><path d="M126 271.8 Q121 275 117.5 279" stroke-width="1.7"/><path d="M122.4 274.6 Q118 278.5 115 282.5" stroke-width="2.8"/><path d="M118.4 278.9 Q113 285.5 111 291 Q109.5 295 108.8 298.7" stroke-width="3.9"/><path d="M336.4 483.2 L319 483.6 Q317 484 318.1 490 Q320.8 505 319.5 523.3 Q319.3 527.2 322.5 527.2 L333.5 526.6 Q338 527.2 342.2 531.2" stroke-width="5"/><path d="M737.6 478.7 Q745 478 750 478.4" stroke-width="3.4"/><path d="M748 478.6 Q754 478.8 758.5 480.2 Q762 481.4 762.3 487 Q763.8 505 763 524 L763.2 529.3 L757 529.6 Q748 529.8 738.4 532.2" stroke-width="4.6"/></g></svg>
</svg>
<div id="tx">
<span class="t" style="left:37px;top:16px;color:#e6e6e6;transform:translate(0.3px,-0.4px) scaleX(0.9191);">Preferences</span>
<span class="t" style="left:44px;top:46px;color:#6c6c6c;transform:translate(0.4px,0px) scaleX(0.9194);">Search</span>
<span class="t" style="left:27px;top:78px;color:#e2e2e2;transform:translate(0px,-0.2px) scaleX(1.0056);">Interface</span>
<span class="t" style="left:27px;top:103px;color:#e2e2e2;transform:translate(0px,0.4px) scaleX(0.9709);">Viewport</span>
<span class="t" style="left:27px;top:129px;color:#e2e2e2;transform:translate(0px,0.4px) scaleX(0.9450);">Lights</span>
<span class="t" style="left:27px;top:156px;color:#e2e2e2;transform:translate(0px,-0.4px) scaleX(0.9212);">Editing</span>
<span class="t" style="left:27px;top:182px;color:#e2e2e2;transform:translate(0px,-0.4px) scaleX(0.9386);">Animation</span>
<span class="t" style="left:27px;top:216px;color:#e2e2e2;transform:translate(0px,-0.5px) scaleX(0.9265);">Get Extensions</span>
<span class="t" style="left:27px;top:248px;color:#e2e2e2;transform:translate(0px,0.2px) scaleX(1.0153);">Add-ons</span>
<span class="t" style="left:27px;top:274px;color:#ffffff;transform:translate(0px,-0.4px) scaleX(0.9327);">Themes</span>
<span class="t" style="left:27px;top:307px;color:#e2e2e2;transform:translate(0px,0px) scaleX(1.0165);">Input</span>
<span class="t" style="left:27px;top:332px;color:#e2e2e2;transform:translate(0px,0.5px) scaleX(0.9431);">Navigation</span>
<span class="t" style="left:27px;top:358px;color:#e2e2e2;transform:translate(0px,0.5px) scaleX(0.9363);">Keymap</span>
<span class="t" style="left:27px;top:392px;color:#e2e2e2;transform:translate(0px,0.1px) scaleX(0.9258);">System</span>
<span class="t" style="left:27px;top:417px;color:#e2e2e2;transform:translate(0px,0.3px) scaleX(0.9186);">Save &amp; Load</span>
<span class="t" style="left:27px;top:443px;color:#e2e2e2;transform:translate(0px,0.2px) scaleX(0.9239);">File Paths</span>
<span class="t" style="left:176px;top:46px;color:#e2e2e2;transform:translate(0.25px,0px) scaleX(0.9853);">Jay 2026</span>
<span class="t" style="left:592px;top:46px;color:#e2e2e2;transform:translate(0px,-0.05px) scaleX(0.9712);">Install...</span>
<span class="t" style="left:719px;top:46px;color:#e2e2e2;transform:translate(0.3px,-0.05px) scaleX(0.9053);">Reset</span>
<span class="t" style="left:210px;top:78px;color:#e2e2e2;transform:translate(0px,0.4px) scaleX(0.9691);">User Interface</span>
<span class="t" style="left:210px;top:104px;color:#e2e2e2;transform:translate(0px,0.49px) scaleX(0.9627);">Text Style</span>
<span class="t" style="left:210px;top:131px;color:#e2e2e2;transform:translate(0px,-0.42px) scaleX(0.9313);">Bone Color Sets</span>
<span class="t" style="left:210px;top:157px;color:#e2e2e2;transform:translate(0px,-0.33px) scaleX(0.9593);">Collection Colors</span>
<span class="t" style="left:210px;top:183px;color:#e2e2e2;transform:translate(0px,-0.24px) scaleX(0.9631);">Strip Color Tags</span>
<span class="t" style="left:190px;top:209px;color:#e2e2e2;transform:translate(0px,-0.15px) scaleX(0.9099);">Regions</span>
<span class="t" style="left:190px;top:235px;color:#e2e2e2;transform:translate(0px,-0.06px) scaleX(0.9259);">Common</span>
<span class="t" style="left:210px;top:261px;color:#e2e2e2;transform:translate(0px,0.2px) scaleX(0.9610);">3D Viewport</span>
<span class="t" style="left:383px;top:289px;color:#d8d8d8;transform:translate(0.75px,0.45px) scaleX(0.8857);">Grid</span>
<span class="t" style="left:324px;top:311px;color:#d8d8d8;transform:translate(0.25px,0.12px) scaleX(0.9333);">Major Grid Lines</span>
<span class="t" style="left:327px;top:333px;color:#d8d8d8;transform:translate(0px,-0.22px) scaleX(0.9588);">Clipping Border</span>
<span class="t" style="left:380px;top:354px;color:#d8d8d8;transform:translate(0.75px,0.45px) scaleX(0.9412);">Wire</span>
<span class="t" style="left:359px;top:376px;color:#d8d8d8;transform:translate(0.25px,0.12px) scaleX(0.9377);">Wire Edit</span>
<span class="t" style="left:288px;top:398px;color:#d8d8d8;transform:translate(0.75px,-0.22px) scaleX(0.9359);">Grease Pencil Wire Edit</span>
<span class="t" style="left:300px;top:419px;color:#d8d8d8;transform:translate(0.75px,0.45px) scaleX(0.9465);">Grease Pencil Vertex</span>
<span class="t" style="left:267px;top:441px;color:#d8d8d8;transform:translate(0px,0.12px) scaleX(0.9498);">Grease Pencil Vertex Select</span>
<span class="t" style="left:285px;top:463px;color:#d8d8d8;transform:translate(0.75px,-0.22px) scaleX(0.9407);">Grease Pencil Keyframe</span>
<span class="t" style="left:326px;top:484px;color:#d8d8d8;transform:translate(0.25px,0.45px) scaleX(0.9453);">Object Selected</span>
<span class="t" style="left:337px;top:506px;color:#d8d8d8;transform:translate(0.5px,0.12px) scaleX(0.9668);">Active Object</span>
<span class="t" style="left:365px;top:528px;color:#d8d8d8;transform:translate(0.75px,-0.22px) scaleX(0.9106);">Camera</span>
<span class="t" style="left:372px;top:549px;color:#d8d8d8;transform:translate(0.5px,0.45px) scaleX(0.9358);">Empty</span>
<span class="t" style="left:379px;top:571px;color:#d8d8d8;transform:translate(0px,0.12px) scaleX(0.9624);">Light</span>
<span class="t" style="left:361px;top:593px;color:#d8d8d8;transform:translate(0.5px,-0.22px) scaleX(0.9686);">Speaker</span>
</div>
</body></html>
